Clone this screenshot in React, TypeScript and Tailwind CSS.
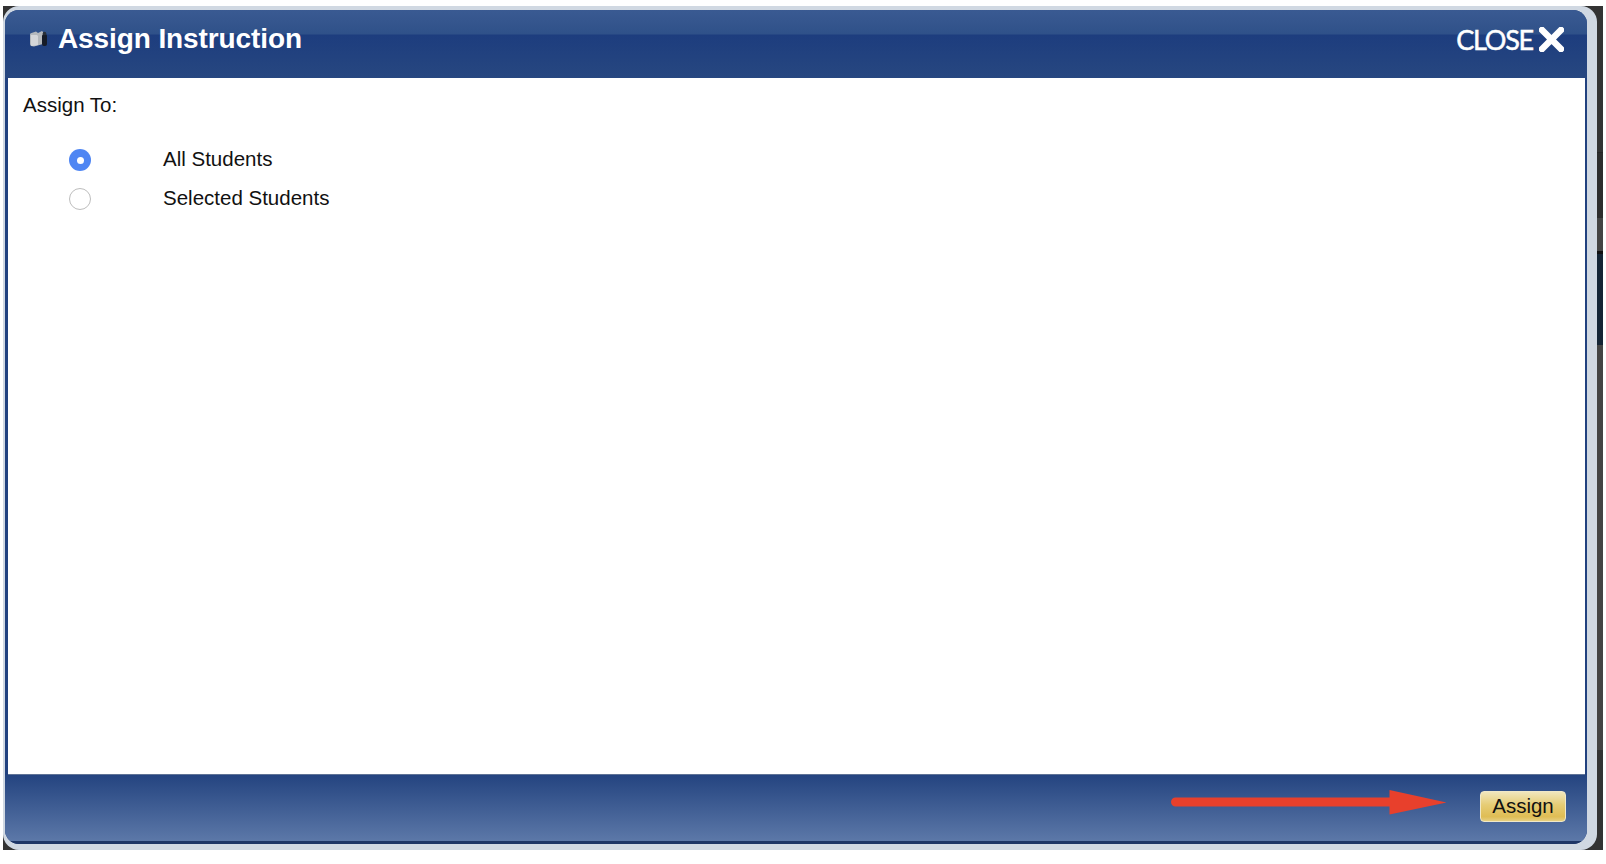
import React from 'react';

const AssignDialog: React.FC = () => {
  return (
    <div className="w-[1606px] h-[864px] bg-white pt-[6px] pl-[3px] font-['Liberation_Sans',Arial,sans-serif] overflow-hidden">
      <div className="flex w-[1600px] h-[844px] bg-[#333333]">
        <div className="w-[1594px] h-full shrink-0 rounded-[16px] bg-[#d0d8e2] pt-[4px] pl-[2px] pr-[10px] pb-[6px]">
          <div className="flex flex-col h-full rounded-[14px] overflow-hidden bg-[#21417f] px-[2.5px]">
            {/* title bar */}
            <div className="-mx-[2.5px] shrink-0 h-[68px] flex bg-[linear-gradient(to_bottom,#3a5a92_0px,#2f5189_24px,#1d3d7e_25px,#274780_68px)] pl-[25px] pr-[23px]">
              <div className="flex items-center gap-[10px] h-[58px]">
                <svg width="18" height="18" viewBox="0 0 18 18">
                  <path d="M0 4.500Q0 3 1.500 3L6 1.500l2 1.500 4-2 1 1v12l-9 2.500-3-.5Q0 15 0 14z" fill="#b4b8bc" />
                  <path d="M1 5h6l1 1v9l-6 1q-1 0-1-1z" fill="#d4d6d9" />
                  <rect x="12" y="4" width="5" height="12" rx="2" fill="#161c28" />
                  <circle cx="14.500" cy="3.500" r="1.800" fill="#2a3038" />
                </svg>
                <span className="text-[28px] font-bold leading-none text-white tracking-[-0.1px]">Assign Instruction</span>
              </div>
              <div className="ml-auto flex items-center gap-[6px] h-[58px]">
                <span className="text-[27px] leading-none text-white font-['Lato',sans-serif] tracking-[-1.2px] [-webkit-text-stroke:0.5px_#ffffff]">CLOSE</span>
                <svg width="25" height="25" viewBox="0 0 25 25">
                  <path d="M3 3l19 19M22 3L3 22" stroke="#ffffff" strokeWidth="6.500" strokeLinecap="square" />
                </svg>
              </div>
            </div>

            {/* body */}
            <div className="flex-1 bg-white pt-[15px] pl-[15.5px] text-[20.5px] leading-[24px] text-[#111111] border-b-[1px] border-[#5f7396]">
              <div>Assign To:</div>
              <div className="flex flex-col gap-[15px] mt-[31px] pl-[46px]">
                <label className="flex items-center gap-[72px] h-[24px]">
                  <span className="w-[22px] h-[22px] rounded-full bg-[#4f86f3] flex items-center justify-center">
                    <span className="w-[7px] h-[7px] rounded-full bg-white"></span>
                  </span>
                  <span className="mb-[2px]">All Students</span>
                </label>
                <label className="flex items-center gap-[72px] h-[24px]">
                  <span className="w-[22px] h-[22px] rounded-full bg-white border-[1.5px] border-[#bdbdbd]"></span>
                  <span className="mb-[2px]">Selected Students</span>
                </label>
              </div>
            </div>

            {/* footer */}
            <div className="-mx-[2.5px] shrink-0 h-[69px] flex items-start justify-end bg-[linear-gradient(to_bottom,#244480,#5c78a8_66px)] border-b-[3px] border-[#1e3666] pt-[16px] pr-[21px]">
              <svg width="276" height="25" viewBox="0 0 276 25" className="mr-[33px] -mt-[1px]">
                <path d="M4.500 7.500h214V0l57 12.500-57 12v-8H4.500a4.500 4.500 0 0 1 0-9z" fill="#e8402c" />
              </svg>
              <button className="w-[86px] h-[31px] rounded-[4px] border border-[#f0e8c8] bg-[linear-gradient(to_bottom,#f0e6bc,#e6cc74_45%,#dfbd55_85%,#e6cf80)] text-[20.5px] leading-none text-[#111111]">
                Assign
              </button>
            </div>
          </div>
        </div>

        {/* what shows of the page behind the dialog */}
        <div className="flex-1 flex flex-col">
          <div className="h-[147px] bg-[#333333] border-b border-[#262626]"></div>
          <div className="h-[65px] bg-[#2d2d2d]"></div>
          <div className="h-[33px] bg-[#444444]"></div>
          <div className="h-[94px] bg-[#152535] border-t-[3px] border-[#111111]"></div>
          <div className="flex-1 bg-[#444444]"></div>
          <div className="h-[100px] bg-[#333333]"></div>
        </div>
      </div>
    </div>
  );
};

export default AssignDialog;
